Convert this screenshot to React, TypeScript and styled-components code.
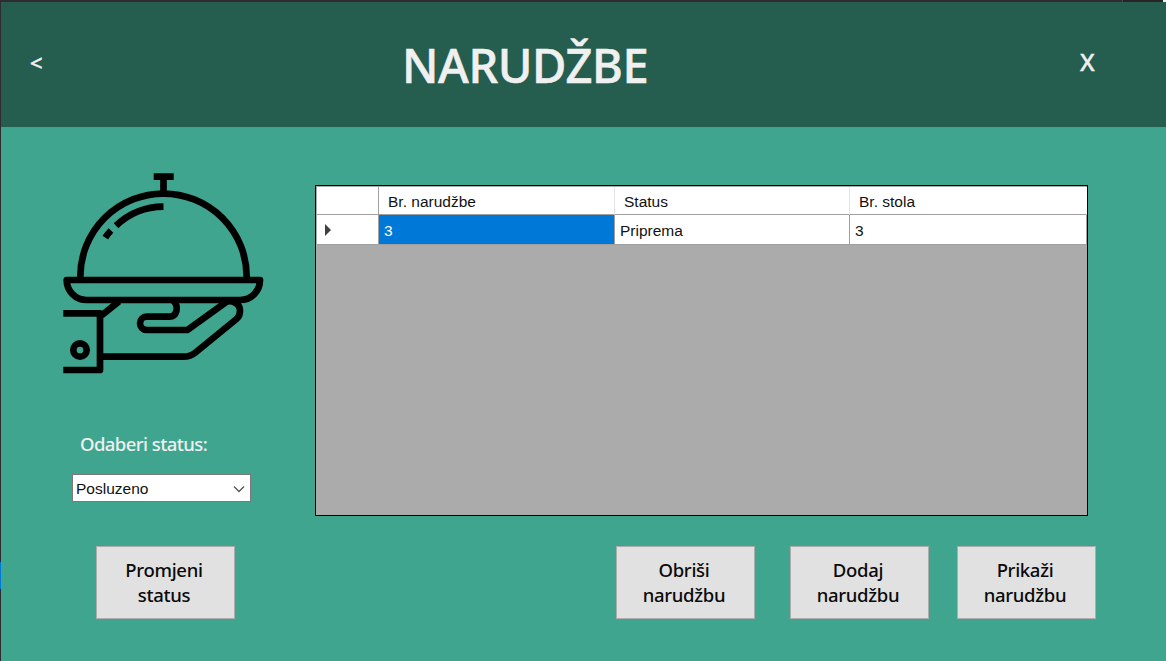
import React from 'react';
import styled, { createGlobalStyle } from 'styled-components';

const GlobalStyle = createGlobalStyle`
  * { box-sizing: border-box; }
  body { margin: 0; background: #2d2d30; }
  button { font: inherit; }
`;

const uiFont = `'Noto Sans', 'Open Sans', sans-serif`;
const gridFont = `'Liberation Sans', Arial, sans-serif`;

const Screen = styled.div`
  display: grid;
  grid-template-columns: 1px 1165px;
  grid-template-rows: 2px 659px;
  width: 1166px;
  height: 661px;
  overflow: hidden;
  background: #2d2d30;
  font-family: ${uiFont};
`;

const TopEdge = styled.div`
  grid-column: 1 / 3;
  display: flex;
  justify-content: flex-end;
  background: #2d2d30;
`;

const EdgePart = styled.div<{ $w: number; $color: string }>`
  width: ${p => p.$w}px;
  background: ${p => p.$color};
`;

const LeftEdge = styled.div`
  padding-top: 560px;
`;

const EdgeAccent = styled.div`
  height: 27px;
  background: #0078d7;
`;

const Window = styled.div`
  display: flex;
  flex-direction: column;
  background: #3fa58e;
`;

const Header = styled.header`
  display: grid;
  grid-template-columns: 70px 1fr 158px;
  height: 125px;
  background: #255d4f;
  color: #f0f0f0;
`;

const HeaderButton = styled.button<{ $size: number; $pad: string }>`
  display: flex;
  align-items: flex-start;
  border: 0;
  background: none;
  color: inherit;
  padding: ${p => p.$pad};
  font-size: ${p => p.$size}px;
  line-height: 30px;
  font-weight: 500;
  -webkit-text-stroke: 0.4px currentColor;
`;

const Title = styled.h1`
  margin: 0;
  padding: 28px 0 0 331px;
  font-size: 47px;
  line-height: 70px;
  font-weight: 500;
  letter-spacing: -0.4px;
  -webkit-text-stroke: 0.6px currentColor;
  white-space: nowrap;
`;

const Body = styled.main`
  display: grid;
  grid-template-columns: 314px 781px;
  flex: 1;
`;

const Side = styled.section`
  display: flex;
  flex-direction: column;
  align-items: flex-start;
  padding: 43px 0 0 59px;
`;

const Label = styled.label`
  margin: 55px 0 0 20px;
  font-size: 18.5px;
  line-height: 26px;
  font-weight: 500;
  letter-spacing: -0.57px;
  color: #f0f0f0;
  white-space: nowrap;
`;

const Select = styled.div`
  display: flex;
  align-items: center;
  justify-content: space-between;
  width: 179px;
  height: 28px;
  margin: 17px 0 0 12px;
  padding: 1px 5px 0 3px;
  border: 1px solid #7a7a7a;
  background: #fff;
  color: #111;
  font: 15.5px ${gridFont};
`;

const Content = styled.section`
  display: flex;
  flex-direction: column;
  padding-top: 58px;
`;

const DataGrid = styled.div`
  width: 773px;
  height: 331px;
  padding: 1px 0 0 1px;
  border: 1px solid #000;
  background: #ababab;
  color: #111;
  font: 15.5px ${gridFont};
`;

const GridRow = styled.div<{ $h: number }>`
  display: grid;
  grid-template-columns: 62px 236px 235px 237px;
  height: ${p => p.$h}px;
`;

const Cell = styled.div<{ $head?: boolean; $selected?: boolean; $rule?: string }>`
  display: flex;
  align-items: center;
  padding: ${p => (p.$head ? '2px 0 0 9px' : '2px 0 0 5px')};
  border-right: 1px solid ${p => p.$rule ?? '#a0a0a0'};
  border-bottom: 1px solid #a0a0a0;
  background: ${p => (p.$selected ? '#0078d7' : '#fff')};
  color: ${p => (p.$selected ? '#fff' : 'inherit')};
`;

const MarkerCell = styled(Cell)`
  padding: 1px 0 0 7px;
`;

const Actions = styled.div`
  display: grid;
  grid-template-columns: 139px 139px 139px;
  column-gap: 35px;
  padding: 30px 0 0 301px;
`;

const ActionButton = styled.button<{ $m?: string }>`
  width: 139px;
  height: 73px;
  margin: ${p => p.$m ?? '0'};
  padding: 0 3px 2px 0;
  border: 1px solid #adadad;
  background: #e1e1e1;
  color: #0a0a0a;
  font-size: 18.5px;
  line-height: 25px;
  font-weight: 500;
  letter-spacing: -0.3px;
`;

const ServingIcon = () => (
  <svg width="208" height="206" viewBox="60 170 208 206" fill="none" stroke="#000" strokeWidth="6.7">
    <path d="M153.7 176.7H173.7M163.5 178V192" />
    <path d="M80.3 279V276.7A83.2 83.2 0 0 1 246.7 276.7V279" />
    <path d="M163.5 206.7A70 70 0 0 0 116 225.7M111 230.5Q108 233.5 105.3 237.6" />
    <path d="M66.7 280H260C260 291 251.500 300 240 300H86.700C75.500 300 66.700 291 66.700 280Z" strokeLinejoin="round" />
    <path d="M63.300 313.300H100V370H63.300" strokeLinejoin="round" />
    <circle cx="80" cy="350" r="6.7" />
    <path d="M101.500 315.500L119 301.300" />
    <path d="M173.500 301C179.500 307 176.500 316.700 169.500 316.700H146.700A6.650 6.650 0 0 0 146.700 330H187.500L225.500 302.500C231 299 240 303.500 240 310.500C240 314.500 239 317 236.500 319L195.500 352.500Q190.500 356.700 183.500 356.700H100" />
  </svg>
);

const ChevronDown = () => (
  <svg width="12" height="8" viewBox="0 0 12 8" fill="none" stroke="#555" strokeWidth="1.3">
    <path d="M1 1.500L6 6.500L11 1.500" />
  </svg>
);

const RowMarker = () => (
  <svg width="8" height="12" viewBox="0 0 8 12" fill="#404040">
    <path d="M1 0L7 6L1 12Z" />
  </svg>
);

const columns = ['Br. narudžbe', 'Status', 'Br. stola'];
const order = ['3', 'Priprema', '3'];

export default function App() {
  return (
    <Screen>
      <GlobalStyle />
      <TopEdge>
        <EdgePart $w={1} $color="#46464a" />
        <EdgePart $w={40} $color="#252526" />
        <EdgePart $w={3} $color="#f0f0f0" />
      </TopEdge>
      <LeftEdge>
        <EdgeAccent />
      </LeftEdge>
      <Window>
        <Header>
          <HeaderButton $size={22} $pad="45px 0 0 29px">&lt;</HeaderButton>
          <Title>NARUDŽBE</Title>
          <HeaderButton $size={24} $pad="45px 0 0 72px">X</HeaderButton>
        </Header>
        <Body>
          <Side>
            <ServingIcon />
            <Label>Odaberi status:</Label>
            <Select>
              Posluzeno
              <ChevronDown />
            </Select>
            <ActionButton $m="44px 0 0 36px">Promjeni<br />status</ActionButton>
          </Side>
          <Content>
            <DataGrid>
              <GridRow $h={28}>
                <Cell $head />
                {columns.map((name, i) => (
                  <Cell key={name} $head $rule={i < 2 ? '#e5e5e5' : '#fff'}>{name}</Cell>
                ))}
              </GridRow>
              <GridRow $h={30}>
                <MarkerCell><RowMarker /></MarkerCell>
                {order.map((value, i) => (
                  <Cell key={i} $selected={i === 0}>{value}</Cell>
                ))}
              </GridRow>
            </DataGrid>
            <Actions>
              <ActionButton>Obriši<br />narudžbu</ActionButton>
              <ActionButton>Dodaj<br />narudžbu</ActionButton>
              <ActionButton $m="0 0 0 -7px">Prikaži<br />narudžbu</ActionButton>
            </Actions>
          </Content>
        </Body>
      </Window>
    </Screen>
  );
}
